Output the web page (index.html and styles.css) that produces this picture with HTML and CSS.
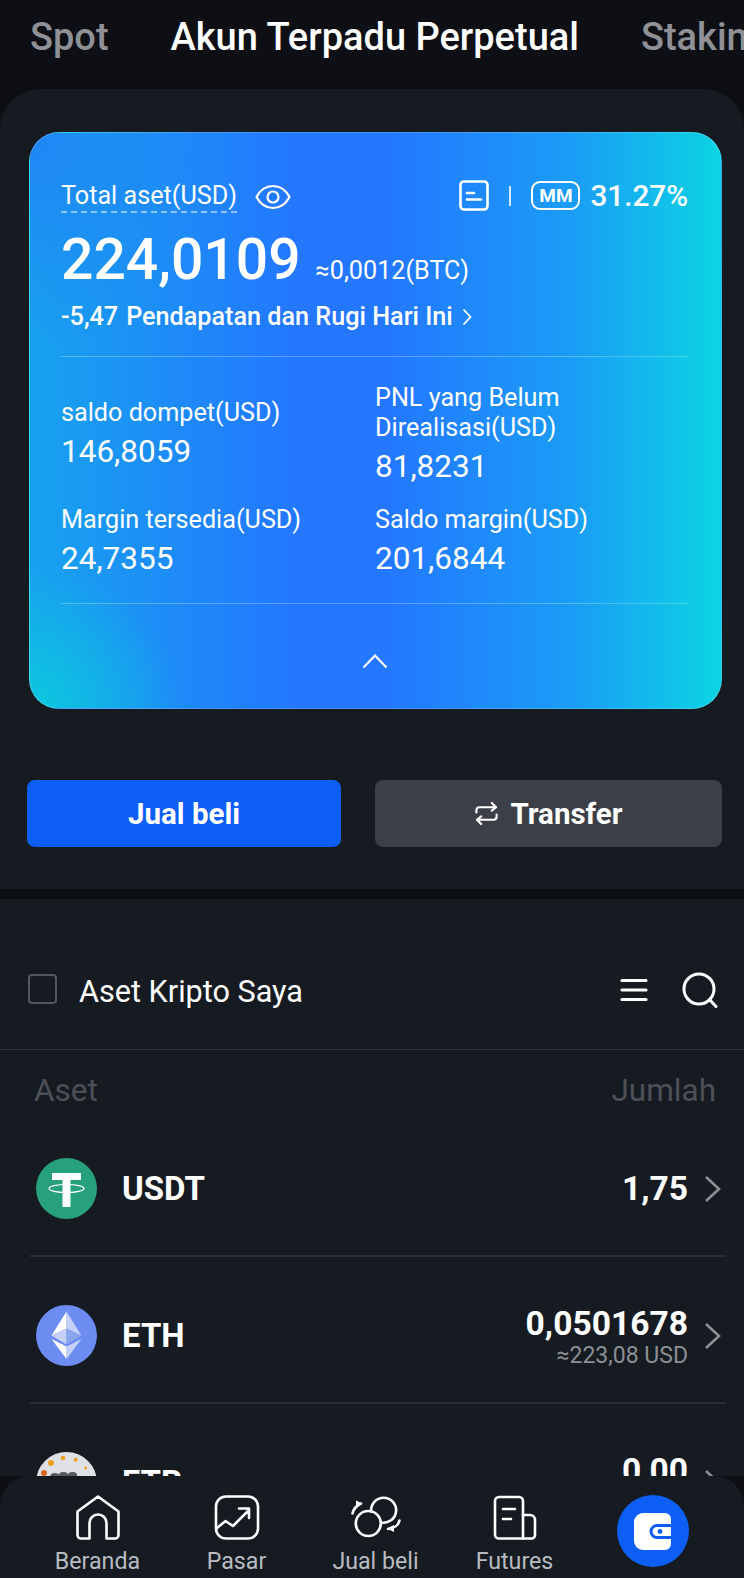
FILE: index.html
```html
<!DOCTYPE html>
<html lang="id">
  <head>
    <meta charset="UTF-8" />
    <meta name="viewport" content="width=device-width, initial-scale=1.0" />
    <title>Aset</title>
    <link rel="stylesheet" href="styles.css">
  </head>
  <body>
    <div class="tabs">
      <span class="tab">Spot</span>
      <span class="tab active">Akun Terpadu Perpetual</span>
      <span class="tab">Staking</span>
    </div>

    <div class="sheet">
      <div class="card">
        <div class="card-top">
          <span class="total-label">Total aset(USD)</span>
          <svg class="eye" viewBox="0 0 36 26" fill="none" stroke="#fff" stroke-width="2.200">
            <path d="M1.500 13C5.500 5.500 11 2 18 2s12.500 3.500 16.500 11C30.500 20.500 25 24 18 24S5.500 20.500 1.500 13z" />
            <circle cx="18" cy="13" r="5.500" />
          </svg>
          <div class="mm-group">
            <svg class="doc" viewBox="0 0 30 31" fill="none" stroke="#fff" stroke-width="2.600" stroke-linecap="round">
              <rect x="1.500" y="1.500" width="27" height="28" rx="3.500" />
              <path d="M8 13h7M8 19.500h14" />
            </svg>
            <span class="mm-sep"></span>
            <span class="mm-badge">MM</span>
            <span class="mm-value">31.27%</span>
          </div>
        </div>

        <div class="total-row">
          <span class="total-value">224,0109</span>
          <span class="total-btc">≈0,0012(BTC)</span>
        </div>

        <div class="pnl-today">
          <span>-5,47</span>
          <span>Pendapatan dan Rugi Hari Ini</span>
          <svg class="pnl-arrow" viewBox="0 0 10 18" fill="none" stroke="#fff" stroke-width="1.800">
            <path d="M1.500 1.500L8.500 9l-7 7.500" />
          </svg>
        </div>

        <div class="stats">
          <div class="stat stat-center">
            <div class="stat-label">saldo dompet(USD)</div>
            <div class="stat-value">146,8059</div>
          </div>
          <div class="stat">
            <div class="stat-label">PNL yang Belum<br>Direalisasi(USD)</div>
            <div class="stat-value">81,8231</div>
          </div>
          <div class="stat">
            <div class="stat-label">Margin tersedia(USD)</div>
            <div class="stat-value">24,7355</div>
          </div>
          <div class="stat">
            <div class="stat-label">Saldo margin(USD)</div>
            <div class="stat-value">201,6844</div>
          </div>
        </div>

        <div class="collapse">
          <svg class="collapse-arrow" viewBox="0 0 26 16" fill="none" stroke="#fff" stroke-width="2.200">
            <path d="M1.500 14.500L13 2.500l11.500 12" />
          </svg>
        </div>
      </div>

      <div class="actions">
        <button class="btn btn-primary">Jual beli</button>
        <button class="btn btn-secondary">
          <svg class="transfer-icon" viewBox="0 0 26 26" fill="none" stroke="#fff" stroke-width="2.200" stroke-linecap="round" stroke-linejoin="round">
            <path d="M2.500 12V9.500a3 3 0 0 1 3-3h17M18.500 2l4.500 4.500-4.500 3.500" />
            <path d="M23.500 14v2.500a3 3 0 0 1-3 3h-17M7.500 24L3 19.500 7.500 16" />
          </svg>
          Transfer
        </button>
      </div>
    </div>

    <div class="band"></div>

    <div class="assets">
      <div class="assets-head">
        <span class="checkbox"></span>
        <span class="assets-title">Aset Kripto Saya</span>
        <svg class="menu-icon" viewBox="0 0 28 24" fill="none" stroke="#fff" stroke-width="3.200" stroke-linecap="round">
          <path d="M2 2.500h24M2 12h24M2 21.500h24" />
        </svg>
        <svg class="search-icon" viewBox="0 0 36 36" fill="none" stroke="#fff" stroke-width="3" stroke-linecap="round">
          <circle cx="17" cy="17" r="15" />
          <path d="M27.500 27.500L34 34.500" />
        </svg>
      </div>

      <div class="col-head">
        <span>Aset</span>
        <span>Jumlah</span>
      </div>

      <div class="row">
        <svg class="coin" viewBox="0 0 61 61">
          <circle cx="30.500" cy="30.500" r="30.500" fill="#26a17b" />
          <path d="M16 15h29v7H34.500v27h-8V22H16z" fill="#fff" />
          <ellipse cx="30.500" cy="30.500" rx="17.500" ry="4" fill="none" stroke="#fff" stroke-width="1.200" />
        </svg>
        <span class="coin-name">USDT</span>
        <div class="amount">
          <div class="amount-value">1,75</div>
        </div>
        <svg class="chevron" viewBox="0 0 18 28" fill="none" stroke="#8c8f94" stroke-width="2.600">
          <path d="M2 2l13 12L2 26" />
        </svg>
      </div>

      <div class="row">
        <svg class="coin" viewBox="0 0 61 61">
          <circle cx="30.500" cy="30.500" r="30.500" fill="#6c8cf2" />
          <path d="M30.500 6.500L15.500 30.500l15-7z" fill="#fff" />
          <path d="M30.500 6.500l15 24-15-7z" fill="#c5d1fa" />
          <path d="M15.500 30.500l15-7v16z" fill="#c5d1fa" />
          <path d="M45.500 30.500l-15-7v16z" fill="#8aa5ee" />
          <path d="M15.500 34l15 7.500V54z" fill="#fff" />
          <path d="M45.500 34l-15 7.500V54z" fill="#c5d1fa" />
        </svg>
        <span class="coin-name">ETH</span>
        <div class="amount">
          <div class="amount-value">0,0501678</div>
          <div class="amount-usd">≈223,08 USD</div>
        </div>
        <svg class="chevron" viewBox="0 0 18 28" fill="none" stroke="#8c8f94" stroke-width="2.600">
          <path d="M2 2l13 12L2 26" />
        </svg>
      </div>

      <div class="row">
        <svg class="coin" viewBox="0 0 61 61">
          <circle cx="30.500" cy="30.500" r="30.500" fill="#dfe1e4" />
          <circle cx="15" cy="11" r="3" fill="#f0a020" />
          <circle cx="27" cy="6" r="2.300" fill="#f0a020" />
          <circle cx="39.700" cy="7.700" r="2" fill="#f0a020" />
          <circle cx="49.700" cy="16" r="1.400" fill="#f0a020" />
          <circle cx="8" cy="21" r="3" fill="#d9681c" />
          <path d="M14 26q0-5 4.500-5t4.500 2q0-3 4.500-3t4.500 3q0-3 4.500-3t4.500 3l1 3z" fill="#55585c" />
        </svg>
        <span class="coin-name">FTR</span>
        <div class="amount amount-raised">
          <div class="amount-value">0,00</div>
        </div>
        <svg class="chevron" viewBox="0 0 18 28" fill="none" stroke="#8c8f94" stroke-width="2.600">
          <path d="M2 2l13 12L2 26" />
        </svg>
      </div>
    </div>

    <div class="nav-back">
      <div class="nav">
        <div class="nav-item">
          <svg class="nav-icon" viewBox="0 0 46 46" fill="none" stroke="#fff" stroke-width="2.600" stroke-linejoin="round">
            <path d="M2.500 16.500L23 1.500l20.500 15V40a3.500 3.500 0 0 1-3.500 3.500H31.500V28a8.500 8.500 0 0 0-17 0v15.500H6A3.500 3.500 0 0 1 2.500 40z" />
          </svg>
          <span>Beranda</span>
        </div>
        <div class="nav-item">
          <svg class="nav-icon" viewBox="0 0 46 46" fill="none" stroke="#fff" stroke-width="2.600" stroke-linejoin="round" stroke-linecap="round">
            <rect x="2" y="1.500" width="42" height="42" rx="10" />
            <path d="M3 33l8.500-7 7.500 5 15-15M25 13.500h10V23" />
          </svg>
          <span>Pasar</span>
        </div>
        <div class="nav-item">
          <svg class="nav-icon nav-icon-trade" viewBox="8 11 54 46" fill="none" stroke="#fff" stroke-width="2.600" stroke-linecap="round">
            <circle cx="27.300" cy="39.500" r="12.500" />
            <path d="M30.200 27.500A12.500 12.500 0 1 1 40 38.400" />
            <path d="M11.500 29.500C12.500 25 15.500 21.500 20 19.500" />
            <path d="M15 16.500l6.500 3-6.500 4z" fill="#fff" stroke="none" />
            <path d="M58.500 36.500C57.500 41 53 44.500 47 45" />
            <path d="M53 41l-7 3.500 7 3.500z" fill="#fff" stroke="none" />
          </svg>
          <span>Jual beli</span>
        </div>
        <div class="nav-item">
          <svg class="nav-icon" viewBox="0 0 46 46" fill="none" stroke="#fff" stroke-width="2.600" stroke-linecap="round" stroke-linejoin="round">
            <path d="M31 43.500H7a4 4 0 0 1-4-4V6a4 4 0 0 1 4-4h20a4 4 0 0 1 4 4v37.500" />
            <path d="M31 20h7a5 5 0 0 1 5 5v15a3.500 3.500 0 0 1-3.500 3.500H31" />
            <path d="M11 14h12M11 24h8" />
          </svg>
          <span>Futures</span>
        </div>
        <div class="nav-item">
          <div class="wallet-btn">
            <svg class="wallet-icon" viewBox="0 0 37 37">
              <path d="M9 0h22a6 6 0 0 1 6 6v25a6 6 0 0 1-6 6H9a9 9 0 0 1-9-9V9a9 9 0 0 1 9-9z" fill="#fff" />
              <path d="M37 12.500H23a6 6 0 0 0 0 12h14" fill="none" stroke="#0d5ef5" stroke-width="3" />
              <circle cx="26" cy="18.500" r="2.400" fill="#0d5ef5" />
            </svg>
          </div>
        </div>
      </div>
    </div>
  </body>
</html>
```

FILE: styles.css
```css
* {
  box-sizing: border-box;
}

html,
body {
  margin: 0;
  height: 1578px;
  overflow: hidden;
}

body {
  position: relative;
  background-color: #0d0f14;
  font-family: Roboto, "Liberation Sans", sans-serif;
  color: #fff;
}

.tabs {
  height: 89px;
  padding: 14px 0 0 30px;
  display: flex;
  gap: 62px;
  white-space: nowrap;
  overflow: hidden;
}

.tab {
  font-size: 38px;
  line-height: 46px;
  font-weight: 500;
  color: #8f9196;
}

.tab.active {
  color: #fff;
}

.sheet {
  background-color: #161b22;
  border-radius: 40px 40px 0 0;
  padding: 43px 22px 42px 27px;
}

.card {
  margin-left: 2px;
  height: 577px;
  padding: 47px 33px 0 31px;
  border: 1px solid rgba(255, 255, 255, 0.18);
  border-radius: 30px;
  background:
    radial-gradient(ellipse 150px 140px at 0 100%, #0cc8de 0%, rgba(12, 200, 222, 0) 100%),
    radial-gradient(ellipse 180px 220px at 0 0, #1f86f5 0%, rgba(31, 134, 245, 0) 100%),
    linear-gradient(90deg, #17a2ee 0%, #2378ff 38%, #2378ff 52%, #1a9cf6 78%, #0cd4e3 100%);
}

.card-top {
  display: flex;
  align-items: center;
  height: 34px;
}

.total-label {
  font-size: 25.2px;
  line-height: 30px;
  border-bottom: 2px dashed rgba(255, 255, 255, 0.5);
}

.eye {
  width: 36px;
  height: 26px;
  margin-left: 18px;
}

.mm-group {
  margin: 0 0 3px auto;
  display: flex;
  align-items: center;
}

.doc {
  width: 30px;
  height: 31px;
}

.mm-sep {
  width: 2px;
  height: 20px;
  margin: 0 20px;
  background-color: rgba(255, 255, 255, 0.8);
}

.mm-badge {
  border: 2px solid #fff;
  border-radius: 9px;
  width: 49px;
  height: 29px;
  font-size: 19px;
  line-height: 25px;
  font-weight: 700;
  text-align: center;
}

.mm-value {
  margin-left: 10px;
  font-size: 29.7px;
  font-weight: 500;
}

.total-row {
  display: flex;
  align-items: baseline;
  margin-top: 15px;
  height: 62px;
}

.total-value {
  font-size: 57px;
  line-height: 62px;
  font-weight: 500;
}

.total-btc {
  margin-left: 15px;
  font-size: 25.2px;
}

.pnl-today {
  margin-top: 11px;
  padding-bottom: 24px;
  border-bottom: 1px solid rgba(255, 255, 255, 0.25);
  display: flex;
  align-items: center;
  gap: 8px;
  font-size: 25.2px;
  line-height: 30px;
  font-weight: 500;
}

.pnl-arrow {
  width: 10px;
  height: 18px;
  margin-left: 1px;
}

.stats {
  display: grid;
  grid-template-columns: 314px 1fr;
  row-gap: 20px;
  padding: 26px 0 26px;
  border-bottom: 1px solid rgba(255, 255, 255, 0.25);
}

.stat-center {
  align-self: center;
}

.stat-label {
  font-size: 25.2px;
  line-height: 30px;
}

.stat-value {
  margin-top: 6px;
  font-size: 31.5px;
  line-height: 36px;
}

.collapse {
  display: flex;
  justify-content: center;
  padding-top: 49px;
}

.collapse-arrow {
  width: 26px;
  height: 16px;
}

.actions {
  display: grid;
  grid-template-columns: 314px 347px;
  column-gap: 34px;
  margin-top: 71px;
}

.btn {
  height: 67px;
  border: 0;
  border-radius: 8px;
  color: #fff;
  font-family: inherit;
  font-size: 29.5px;
  font-weight: 700;
  display: flex;
  align-items: center;
  justify-content: center;
  gap: 11px;
}

.btn-primary {
  background-color: #0d5ef5;
}

.btn-secondary {
  background-color: #3c3f47;
}

.transfer-icon {
  width: 25px;
  height: 25px;
}

.band {
  height: 10px;
}

.assets {
  height: 700px;
  padding-top: 1px;
  background-color: #161b22;
}

.assets-head {
  height: 150px;
  padding: 31px 26px 0 28px;
  border-bottom: 1px solid #33373e;
  display: flex;
  align-items: center;
}

.checkbox {
  width: 29px;
  height: 30px;
  margin-bottom: 2px;
  border: 2px solid #53565c;
  border-radius: 4px;
}

.assets-title {
  margin: 2px 0 0 22px;
  font-size: 30.6px;
}

.menu-icon {
  width: 28px;
  height: 24px;
  margin-left: auto;
}

.search-icon {
  width: 36px;
  height: 36px;
  margin-left: 34px;
}

.col-head {
  display: flex;
  justify-content: space-between;
  padding: 22px 28px 0 34px;
  font-size: 31.5px;
  line-height: 38px;
  color: #4d5056;
}

.row {
  margin: 0 18px 0 30px;
  height: 147px;
  padding: 12px 4px 0 6px;
  border-bottom: 2px solid #2a2d33;
  display: flex;
  align-items: center;
}

.coin {
  width: 61px;
  height: 61px;
  flex-shrink: 0;
}

.coin-name {
  margin-left: 25px;
  font-size: 33px;
  font-weight: 700;
}

.amount {
  margin-left: auto;
  text-align: right;
}

.amount-raised {
  margin-bottom: 24px;
}

.amount-value {
  font-size: 33.6px;
  line-height: 40px;
  font-weight: 700;
}

.amount-usd {
  font-size: 23px;
  line-height: 24px;
  color: #8c8f94;
}

.chevron {
  width: 18px;
  height: 28px;
  margin-left: 16px;
}

.nav-back {
  position: absolute;
  left: 0;
  right: 0;
  top: 1476px;
  bottom: 0;
  background-color: #0d0f14;
}

.nav {
  height: 100%;
  padding: 19px 21px 0 28px;
  background-color: #161b22;
  border-radius: 30px 30px 0 0;
  display: grid;
  grid-template-columns: repeat(5, 139px);
}

.nav-item {
  display: flex;
  flex-direction: column;
  align-items: center;
  gap: 5px;
  font-size: 23.2px;
  line-height: 30px;
  color: #b8bbc0;
  white-space: nowrap;
}

.nav-icon {
  width: 46px;
  height: 46px;
}

.nav-icon-trade {
  width: 54px;
}

.wallet-btn {
  width: 72px;
  height: 72px;
  margin-right: 2px;
  border-radius: 50%;
  background-color: #0d5ef5;
  display: flex;
  align-items: center;
  justify-content: center;
}

.wallet-icon {
  width: 37px;
  height: 37px;
}
```
